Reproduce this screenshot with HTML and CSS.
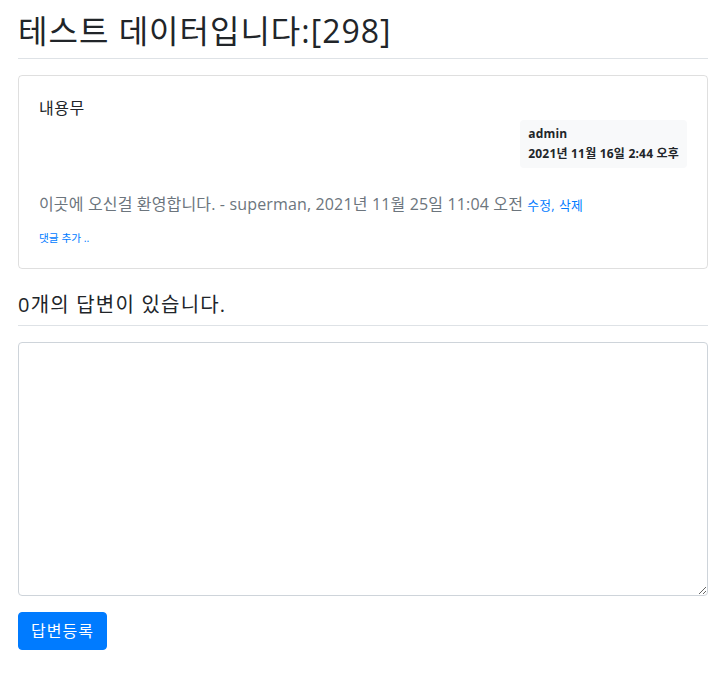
FILE: index.html
```html
<!DOCTYPE html>
<html lang="ko">
	<head>
		<meta charset="UTF-8" />
		<meta name="viewport" content="width=device-width, initial-scale=1.0" />
		<title>질문 상세</title>
		<link rel="stylesheet" href="styles.css">
	</head>
	<body>
		<div class="container">
			<h2 class="page-title">테스트 데이터입니다:[298]</h2>

			<div class="card">
				<div class="card-body">
					<div class="card-text">내용무</div>
					<div class="author-row">
						<div class="badge">
							<div>admin</div>
							<div class="badge-date">2021년 11월 16일 2:44 오후</div>
						</div>
					</div>
					<div class="comments">
						<div class="comment">
							<span>이곳에 오신걸 환영합니다.</span>
							<span> - superman, 2021년 11월 25일 11:04 오전</span>
							<a href="#" class="small">수정</a><span class="small link-sep">,</span>
							<a href="#" class="small">삭제</a>
						</div>
						<div>
							<a href="#" class="small"><small>댓글 추가 ..</small></a>
						</div>
					</div>
				</div>
			</div>

			<h5 class="answer-count">0개의 답변이 있습니다.</h5>

			<form class="answer-form">
				<div class="form-group">
					<textarea name="content" class="form-control" rows="10"></textarea>
				</div>
				<button type="submit" class="btn">답변등록</button>
			</form>
		</div>
	</body>
</html>
```

FILE: styles.css
```css
body {
	margin: 0;
	font-family: "Open Sans", "Noto Sans CJK KR", sans-serif;
	font-size: 16px;
	line-height: 1.5;
	color: #212529;
	background: #fff;
}
.container {
	padding: 0 15px 0 18px;
	margin-top: 4px;
}
.page-title {
	font-size: 32px;
	font-weight: 400;
	line-height: 1.2;
	letter-spacing: 1px;
	margin: 0;
	padding: 8px 0;
	border-bottom: 1px solid #dee2e6;
}
.card {
	margin: 16px 0;
	border: 1px solid rgba(0, 0, 0, 0.125);
	border-radius: 4px;
}
.card-body {
	padding: 20px;
}
.card-text {
	white-space: pre-line;
	letter-spacing: 0.5px;
}
.author-row {
	display: flex;
	justify-content: flex-end;
}
.badge {
	background-color: #f8f9fa;
	border-radius: 4px;
	padding: 8px;
	font-size: 12px;
	font-weight: 700;
	line-height: 1;
	letter-spacing: 0.2px;
	text-align: left;
}
.badge-date {
	margin-top: 8px;
}
.comments {
	margin-top: 16px;
}
.comment {
	padding: 8px 0;
	color: #6c757d;
	letter-spacing: 0.15px;
}
a {
	color: #007bff;
	text-decoration: none;
}
.small {
	font-size: 80%;
}
.link-sep {
	color: #007bff;
}
.answer-count {
	font-size: 20px;
	font-weight: 400;
	line-height: 1.2;
	letter-spacing: 1.2px;
	margin: 0;
	padding: 8px 0;
	border-bottom: 1px solid #dee2e6;
}
.answer-form {
	margin: 16px 0;
}
.form-group {
	margin-bottom: 16px;
}
.form-control {
	display: block;
	width: 100%;
	box-sizing: border-box;
	padding: 6px 12px;
	font-family: inherit;
	font-size: 16px;
	line-height: 1.5;
	color: #495057;
	border: 1px solid #ced4da;
	border-radius: 4px;
	resize: vertical;
}
.btn {
	font-family: inherit;
	font-size: 16px;
	line-height: 1.5;
	letter-spacing: 1px;
	padding: 6px 12px;
	color: #fff;
	background-color: #007bff;
	border: 1px solid #007bff;
	border-radius: 4px;
	cursor: pointer;
}
```
